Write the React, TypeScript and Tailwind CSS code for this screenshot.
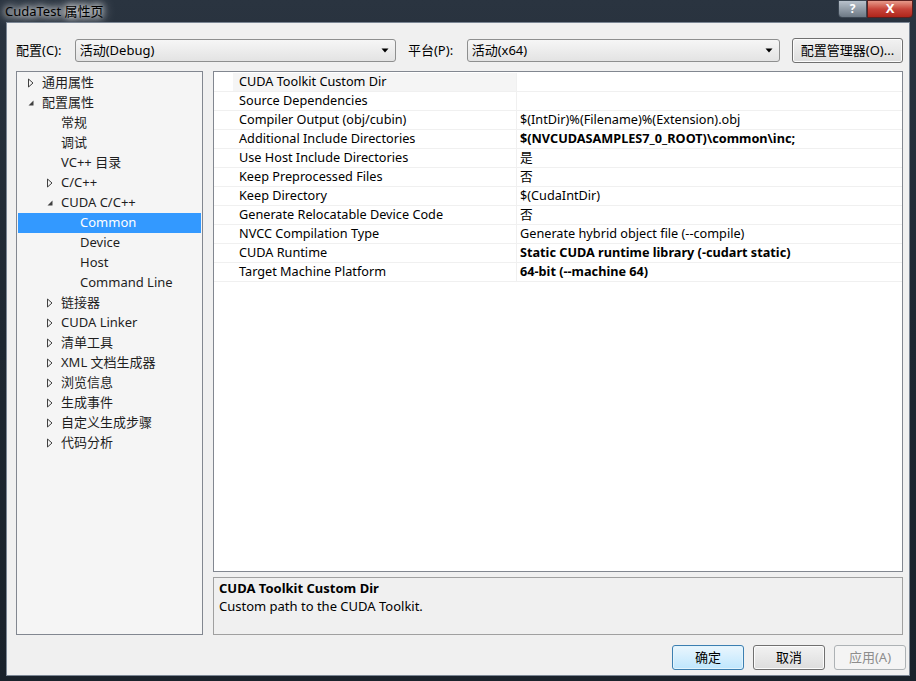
import React from 'react'

const font = "font-['Noto_Sans','Noto_Sans_CJK_SC',sans-serif]"

type Node = {
  label: string
  level: number
  arrow?: 'open' | 'closed'
  selected?: boolean
}

const tree: Node[] = [
  { label: '通用属性', level: 0, arrow: 'closed' },
  { label: '配置属性', level: 0, arrow: 'open' },
  { label: '常规', level: 1 },
  { label: '调试', level: 1 },
  { label: 'VC++ 目录', level: 1 },
  { label: 'C/C++', level: 1, arrow: 'closed' },
  { label: 'CUDA C/C++', level: 1, arrow: 'open' },
  { label: 'Common', level: 2, selected: true },
  { label: 'Device', level: 2 },
  { label: 'Host', level: 2 },
  { label: 'Command Line', level: 2 },
  { label: '链接器', level: 1, arrow: 'closed' },
  { label: 'CUDA Linker', level: 1, arrow: 'closed' },
  { label: '清单工具', level: 1, arrow: 'closed' },
  { label: 'XML 文档生成器', level: 1, arrow: 'closed' },
  { label: '浏览信息', level: 1, arrow: 'closed' },
  { label: '生成事件', level: 1, arrow: 'closed' },
  { label: '自定义生成步骤', level: 1, arrow: 'closed' },
  { label: '代码分析', level: 1, arrow: 'closed' },
]

const props = [
  { name: 'CUDA Toolkit Custom Dir', value: '', bold: false },
  { name: 'Source Dependencies', value: '', bold: false },
  { name: 'Compiler Output (obj/cubin)', value: '$(IntDir)%(Filename)%(Extension).obj', bold: false },
  { name: 'Additional Include Directories', value: '$(NVCUDASAMPLES7_0_ROOT)\\common\\inc;', bold: true },
  { name: 'Use Host Include Directories', value: '是', bold: false },
  { name: 'Keep Preprocessed Files', value: '否', bold: false },
  { name: 'Keep Directory', value: '$(CudaIntDir)', bold: false },
  { name: 'Generate Relocatable Device Code', value: '否', bold: false },
  { name: 'NVCC Compilation Type', value: 'Generate hybrid object file (--compile)', bold: false },
  { name: 'CUDA Runtime', value: 'Static CUDA runtime library (-cudart static)', bold: true },
  { name: 'Target Machine Platform', value: '64-bit (--machine 64)', bold: true },
]

function Arrow({ kind, light }: { kind: 'open' | 'closed'; light?: boolean }) {
  if (kind === 'open') {
    return (
      <svg width="8" height="8" viewBox="0 0 8 8">
        <path d="M6.5 1.5 L6.5 6.5 L1.5 6.5 Z" fill={light ? '#fff' : '#404040'} />
      </svg>
    )
  }
  return (
    <svg width="8" height="10" viewBox="0 0 8 10">
      <path d="M1.5 1 L6 5 L1.5 9 Z" fill="none" stroke="#404040" strokeWidth="1" />
    </svg>
  )
}

function Combo({ text, width }: { text: string; width: string }) {
  return (
    <div
      className={`${width} h-[23px] flex items-center justify-between pl-[4px] pr-[6px] rounded-[3px] border border-[#8e8f8f] bg-gradient-to-b from-[#f6f6f6] to-[#e3e3e3] text-[13px] text-black`}
    >
      <span>{text}</span>
      <svg width="8" height="5" viewBox="0 0 8 5">
        <path d="M0.5 0.5 L7.5 0.5 L4 4.5 Z" fill="#000" />
      </svg>
    </div>
  )
}

function Button({ label, primary, disabled, width = 'w-[72px]' }: { label: string; primary?: boolean; disabled?: boolean; width?: string }) {
  return (
    <div
      className={`${width} h-[25px] flex items-center justify-center rounded-[3px] border text-[13px] ${
        disabled
          ? 'border-[#adb2b5] bg-[#f4f4f4] text-[#8d8d8d]'
          : primary
            ? 'border-[#3c7fb1] bg-gradient-to-b from-[#eaf6fd] to-[#bee6fd] text-black shadow-[inset_0_0_0_1px_#e3f4fc]'
            : 'border-[#707070] bg-gradient-to-b from-[#f2f2f2] to-[#dddddd] text-black shadow-[inset_0_0_0_1px_#fcfcfc]'
      }`}
    >
      {label}
    </div>
  )
}

export default function App() {
  return (
    <div className={`${font} w-[916px] h-[681px] flex flex-col bg-gradient-to-b from-[#2a3440] via-[#1e2731] to-[#1a222b] overflow-hidden`}>
      {/* title bar */}
      <div className="h-[23px] flex items-start justify-between pl-[5px]">
        <span className="mt-[2px] text-[13px] text-black [text-shadow:0_0_6px_#fff,0_0_10px_#fff,0_0_14px_#ddd]">
          CudaTest 属性页
        </span>
        <div className="flex mr-[3px]">
          <div className="w-[29px] h-[18px] flex items-center justify-center rounded-bl-[4px] border border-[#3b4652] bg-gradient-to-b from-[#b9c2cc] to-[#6d7985] text-white text-[12px] font-bold">
            ?
          </div>
          <div className="w-[46px] h-[18px] flex items-center justify-center rounded-br-[4px] border border-[#5a2020] bg-gradient-to-b from-[#e6998a] via-[#c7443a] to-[#b0251a] text-white text-[13px] font-bold">
            X
          </div>
        </div>
      </div>

      {/* client area */}
      <div className="flex-1 mx-[6px] mb-[5px] bg-[#f0f0f0] border border-[#7b8694] flex flex-col pl-[9px] pr-[6px] pt-[15px] pb-[5px]">
        <div className="flex items-center h-[25px] text-[13px] text-black">
          <span className="w-[59px]">配置(C):</span>
          <Combo text="活动(Debug)" width="w-[323px]" />
          <span className="ml-[12px] w-[59px]">平台(P):</span>
          <Combo text="活动(x64)" width="w-[315px]" />
          <div className="ml-[12px]">
            <Button label="配置管理器(O)..." width="w-[111px]" />
          </div>
        </div>

        <div className="flex mt-[8px] h-[564px]">
          {/* tree */}
          <div className="w-[187px] border border-[#828790] bg-[#f5f5f5] pt-[1px] px-[1px] text-[13px] text-[#1e1e1e]">
            {tree.map((n) => (
              <div
                key={n.label}
                className={`h-[20px] flex items-center ${n.selected ? 'bg-[#3399ff] text-white' : ''}`}
              >
                <div
                  className={`flex items-center justify-center w-[14px] ${
                    n.level === 0 ? 'ml-[6px]' : n.level === 1 ? 'ml-[25px]' : 'ml-[44px]'
                  } mr-[4px]`}
                >
                  {n.arrow && <Arrow kind={n.arrow} light={n.selected} />}
                </div>
                <span>{n.label}</span>
              </div>
            ))}
          </div>

          <div className="ml-[10px] flex-1 flex flex-col">
            {/* property grid */}
            <div className="h-[501px] border border-[#828790] bg-white pt-[1px] text-[12.7px] text-black">
              {props.map((p, i) => (
                <div key={p.name} className="h-[19px] flex border-b border-[#f0f0f0]">
                  <div className="w-[19px] bg-white" />
                  <div
                    className={`w-[284px] flex items-center pl-[6px] border-r border-[#f0f0f0] ${
                      i === 0 ? 'bg-[#f5f5f5]' : ''
                    }`}
                  >
                    {p.name}
                  </div>
                  <div className={`flex-1 flex items-center pl-[3px] ${p.bold ? 'font-bold' : ''}`}>{p.value}</div>
                </div>
              ))}
            </div>

            {/* description */}
            <div className="mt-[5px] flex-1 border border-[#a0a0a0] bg-[#f0f0f0] pl-[5px] pt-[1px] text-[13px] text-black leading-[18px]">
              <div className="font-bold">CUDA Toolkit Custom Dir</div>
              <div>Custom path to the CUDA Toolkit.</div>
            </div>
          </div>
        </div>

        <div className="flex justify-end gap-[9px] mt-[10px] mr-[-3px]">
          <Button label="确定" primary />
          <Button label="取消" />
          <Button label="应用(A)" disabled />
        </div>
      </div>
    </div>
  )
}
